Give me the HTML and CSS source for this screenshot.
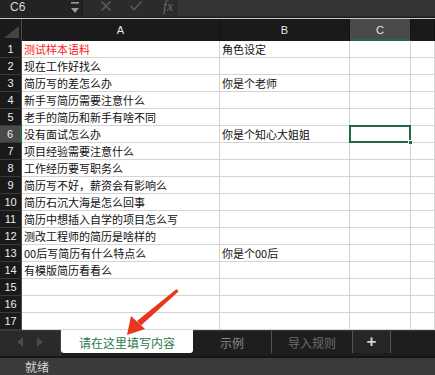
FILE: index.html
```html
<!DOCTYPE html>
<html lang="zh">
<head>
<meta charset="utf-8">
<link rel="stylesheet" href="styles.css">
</head>
<body>
<div class="app">
  <div class="topbar">
    <div class="namebox">
      <span class="cellref">C6</span>
      <span class="spin">
        <svg width="10" height="14" viewBox="0 0 10 14"><rect x="1" y="1" width="8" height="1.6" fill="#9a9a9a"/><path d="M1 7 L9 7 L5 12 Z" fill="#9a9a9a"/></svg>
      </span>
    </div>
    <div class="tools">
      <svg class="tool" width="12" height="12" viewBox="0 0 12 12"><path d="M1.5 1.5 L10.5 10.5 M10.5 1.5 L1.5 10.5" stroke="#5a5a5a" stroke-width="1.6"/></svg>
      <svg class="tool" width="14" height="12" viewBox="0 0 14 12"><path d="M1.5 6 L5 9.5 L12.5 1.5" stroke="#5a5a5a" stroke-width="1.6" fill="none"/></svg>
      <span class="fx">fx</span>
    </div>
    <div class="formula"></div>
  </div>
  <div class="divider"></div>
  <div class="sheet">
    <div class="corner"><span class="tri"></span></div>
    <div class="colhead">A</div>
    <div class="colhead">B</div>
    <div class="colhead sel">C</div>
    <div class="colhead last"></div>

    <div class="rowhead">1</div><div class="cell red">测试样本语料</div><div class="cell">角色设定</div><div class="cell"></div><div class="cell"></div>
    <div class="rowhead">2</div><div class="cell">现在工作好找么</div><div class="cell"></div><div class="cell"></div><div class="cell"></div>
    <div class="rowhead">3</div><div class="cell">简历写的差怎么办</div><div class="cell">你是个老师</div><div class="cell"></div><div class="cell"></div>
    <div class="rowhead">4</div><div class="cell">新手写简历需要注意什么</div><div class="cell"></div><div class="cell"></div><div class="cell"></div>
    <div class="rowhead">5</div><div class="cell">老手的简历和新手有啥不同</div><div class="cell"></div><div class="cell"></div><div class="cell"></div>
    <div class="rowhead sel">6</div><div class="cell">没有面试怎么办</div><div class="cell">你是个知心大姐姐</div><div class="cell active"><span class="handle"></span></div><div class="cell"></div>
    <div class="rowhead">7</div><div class="cell">项目经验需要注意什么</div><div class="cell"></div><div class="cell"></div><div class="cell"></div>
    <div class="rowhead">8</div><div class="cell">工作经历要写职务么</div><div class="cell"></div><div class="cell"></div><div class="cell"></div>
    <div class="rowhead">9</div><div class="cell">简历写不好，薪资会有影响么</div><div class="cell"></div><div class="cell"></div><div class="cell"></div>
    <div class="rowhead">10</div><div class="cell">简历石沉大海是怎么回事</div><div class="cell"></div><div class="cell"></div><div class="cell"></div>
    <div class="rowhead">11</div><div class="cell">简历中想插入自学的项目怎么写</div><div class="cell"></div><div class="cell"></div><div class="cell"></div>
    <div class="rowhead">12</div><div class="cell">测改工程师的简历是啥样的</div><div class="cell"></div><div class="cell"></div><div class="cell"></div>
    <div class="rowhead">13</div><div class="cell">00后写简历有什么特点么</div><div class="cell">你是个00后</div><div class="cell"></div><div class="cell"></div>
    <div class="rowhead">14</div><div class="cell">有模版简历看看么</div><div class="cell"></div><div class="cell"></div><div class="cell"></div>
    <div class="rowhead">15</div><div class="cell"></div><div class="cell"></div><div class="cell"></div><div class="cell"></div>
    <div class="rowhead">16</div><div class="cell"></div><div class="cell"></div><div class="cell"></div><div class="cell"></div>
    <div class="rowhead">17</div><div class="cell"></div><div class="cell"></div><div class="cell"></div><div class="cell"></div>
  </div>
  <div class="tabbar">
    <div class="nav">
      <svg width="10" height="12" viewBox="0 0 10 12"><path d="M8 1 L8 11 L2 6 Z" fill="#4a4a4a"/></svg>
      <svg width="10" height="12" viewBox="0 0 10 12"><path d="M2 1 L2 11 L8 6 Z" fill="#4a4a4a"/></svg>
    </div>
    <div class="tab active">请在这里填写内容</div>
    <div class="tab t2">示例</div>
    <div class="tab t3">导入规则</div>
    <div class="tab plus">+</div>
    <div class="tabrest"></div>
  </div>
  <div class="status"><span>就绪</span></div>
  <svg class="arrow" width="435" height="375" viewBox="0 0 435 375">
    <path d="M176.5 289 L178.5 291.5 L141 325.5 L137 321 Z" fill="#e8361f"/>
    <path d="M127 335 L131 316 L145 329 Z" fill="#e8361f"/>
  </svg>
</div>
</body>
</html>
```
FILE: styles.css
```css
* { box-sizing: border-box; }
html, body { margin: 0; padding: 0; }
body {
  width: 435px;
  height: 375px;
  overflow: hidden;
  background: #1e1e1e;
  font-family: "Noto Sans CJK SC", "Noto Sans", sans-serif;
}
.app {
  position: relative;
  width: 435px;
  height: 375px;
  display: flex;
  flex-direction: column;
}
.topbar {
  height: 16px;
  display: flex;
  background: #2b2b2b;
}
.namebox {
  width: 83px;
  background: #232323;
  display: flex;
  align-items: center;
  justify-content: space-between;
  padding: 0 2px 0 10px;
  border-right: 1px solid #1a1a1a;
}
.cellref {
  color: #d8d8d8;
  font-family: "Liberation Sans", sans-serif;
  font-size: 12px;
  line-height: 14px;
  margin-top: -3px;
}
.spin { display: flex; align-items: center; margin-top: -1px; }
.tools {
  width: 95px;
  display: flex;
  align-items: center;
  padding-left: 17px;
  gap: 17px;
}
.tool { margin-top: -4px; }
.fx {
  color: #6a6a6a;
  font-family: "Liberation Serif", serif;
  font-style: italic;
  font-size: 14px;
  line-height: 14px;
  margin-top: -3px;
  margin-left: 3px;
}
.formula {
  flex: 1;
  background: #343434;
}
.divider {
  height: 3px;
  background: #1b1b1b;
  border-top: 1px solid #2a2a2a;
  border-bottom: 1px solid #c9c9c9;
}
.sheet {
  display: grid;
  grid-template-columns: 22px 198px 130px 61px 24px;
  grid-template-rows: 22px repeat(17, 17px);
  background: #fff;
}
.corner {
  background: #1a1a1a;
  border-right: 1px solid #4a4a4a;
  position: relative;
}
.tri {
  position: absolute;
  right: 2px;
  bottom: 3px;
  width: 0;
  height: 0;
  border-left: 15px solid transparent;
  border-bottom: 12px solid #444;
}
.colhead {
  background: #1a1a1a;
  color: #e6e6e6;
  font-family: "Liberation Sans", sans-serif;
  font-size: 11px;
  display: flex;
  align-items: center;
  justify-content: center;
  border-right: 1px solid #111;
}
.colhead.sel {
  background: #4a4a4a;
  border-bottom: 2px solid #1f6e43;
  padding-top: 2px;
}
.rowhead {
  background: #1a1a1a;
  color: #ececec;
  font-family: "Liberation Sans", sans-serif;
  font-size: 11px;
  display: flex;
  align-items: center;
  justify-content: center;
  border-bottom: 1px solid #3a3a3a;
  border-right: 1px solid #4a4a4a;
}
.rowhead.sel {
  background: #4a4a4a;
  border-right: 2px solid #1f6e43;
}
.cell {
  background: #fff;
  border-right: 1px solid #d4d4d4;
  border-bottom: 1px solid #d4d4d4;
  font-size: 11px;
  line-height: 16px;
  color: #111;
  padding-left: 2px;
  white-space: nowrap;
  overflow: hidden;
}
.cell.red { color: #ff1a1a; }
.cell.active {
  position: relative;
  overflow: visible;
  border: 2px solid #1e6b41;
  margin: -1px 0 0 -1px;
}
.handle {
  position: absolute;
  right: -4px;
  bottom: -4px;
  width: 5px;
  height: 5px;
  background: #1e6b41;
  border: 1px solid #fff;
}
.tabbar {
  height: 26px;
  display: flex;
  background: #1e1e1e;
  border-top: 1px solid #3a3a3a;
}
.nav {
  width: 61px;
  background: #2a2a2a;
  display: flex;
  align-items: center;
  justify-content: center;
  gap: 10px;
  padding-bottom: 4px;
  border-right: 1px solid #444;
}
.tab {
  display: flex;
  align-items: center;
  justify-content: center;
  font-size: 12px;
  height: 22px;
}
.tab.active {
  width: 132px;
  background: #fff;
  color: #2a7a4b;
  margin-top: -1px;
  height: 23px;
  border-radius: 0 0 3px 3px;
  padding-top: 1px;
}
.tab.t2 {
  width: 79px;
  color: #8a8a8a;
  justify-content: flex-start;
  padding-left: 27px;
  border-right: 1px solid #555;
}
.tab.t3 {
  width: 81px;
  color: #6d6d6d;
  border-right: 1px solid #555;
}
.tab.plus {
  width: 38px;
  color: #d0d0d0;
  background: #262626;
  font-family: "Liberation Sans", sans-serif;
  font-size: 17px;
  font-weight: bold;
  border-right: 1px solid #555;
}
.tabrest { flex: 1; }
.status {
  flex: 1;
  background: #3b3b3b;
  border-top: 2px solid #151515;
  display: flex;
  align-items: center;
  padding-left: 25px;
}
.status span {
  color: #d6d6d6;
  font-size: 12px;
}
.arrow {
  position: absolute;
  left: 0;
  top: 0;
  pointer-events: none;
}
```
